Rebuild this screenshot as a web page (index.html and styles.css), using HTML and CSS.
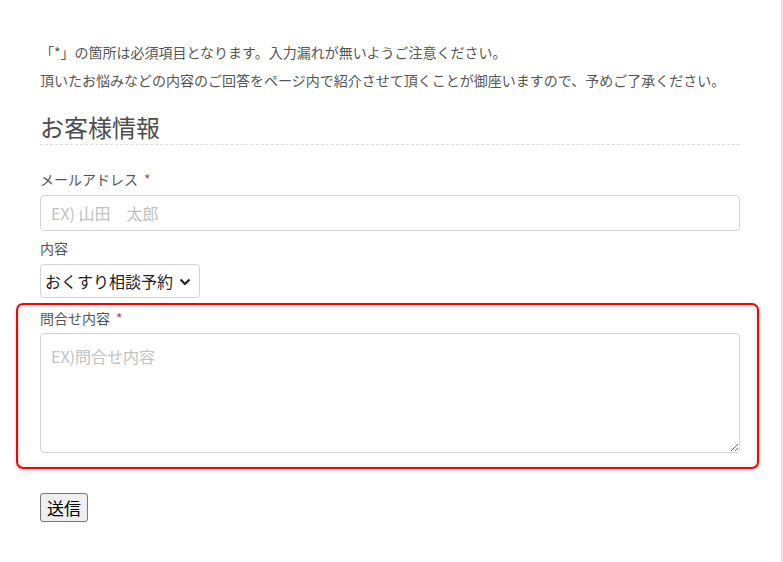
FILE: index.html
```html
<!DOCTYPE html>
<html lang="ja">
<head>
<meta charset="utf-8">
<title>お問い合わせ</title>
<link rel="stylesheet" href="styles.css">
</head>
<body>
<div class="page">
  <form class="form">
    <div class="intro">
      <p>「*」の箇所は必須項目となります。入力漏れが無いようご注意ください。</p>
      <p>頂いたお悩みなどの内容のご回答をページ内で紹介させて頂くことが御座いますので、予めご了承ください。</p>
    </div>
    <h2 class="heading">お客様情報</h2>
    <label class="label label-first" for="email">メールアドレス<span class="req">*</span></label>
    <input class="input" id="email" type="text" placeholder="EX) 山田　太郎">
    <label class="label label-mid" for="kind">内容</label>
    <div class="select-wrap">
      <select class="select" id="kind">
        <option>おくすり相談予約</option>
      </select>
      <svg class="chevron" width="12" height="8" viewBox="0 0 12 8"><path d="M1.5 1.5 L6 6 L10.5 1.5" fill="none" stroke="#222" stroke-width="2.2"/></svg>
    </div>
    <div class="highlight">
      <label class="label" for="msg">問合せ内容<span class="req">*</span></label>
      <textarea class="textarea" id="msg" placeholder="EX)問合せ内容"></textarea>
    </div>
    <div class="actions">
      <button class="submit" type="button">送信</button>
    </div>
  </form>
</div>
</body>
</html>
```

FILE: styles.css
```css
html, body {
  margin: 0;
  padding: 0;
  background: #fff;
}
body {
  font-family: "Noto Sans CJK JP", "Noto Sans", sans-serif;
  color: #555;
}
.page {
  box-sizing: border-box;
  width: 783px;
  min-height: 562px;
  border-right: 2px solid #e6e6e6;
  padding: 38px 0 0 40px;
}
.form {
  width: 700px;
  display: flex;
  flex-direction: column;
  align-items: flex-start;
}
.intro {
  align-self: stretch;
}
.intro p {
  margin: 0;
  font-size: 14px;
  line-height: 28px;
  color: #555;
  white-space: nowrap;
}
.heading {
  align-self: stretch;
  margin: 16px 0 0;
  font-size: 24px;
  font-weight: 400;
  line-height: 34px;
  color: #4d4d4d;
  border-bottom: 1px dashed #dcdcdc;
}
.label {
  display: block;
  font-size: 14px;
  line-height: 20px;
  color: #555;
}
.label-first {
  margin-top: 24px;
}
.label-mid {
  margin-top: 7px;
}
.req {
  margin-left: 6px;
  color: #b54452;
}
.input {
  box-sizing: border-box;
  align-self: stretch;
  margin-top: 6px;
  height: 36px;
  padding: 0 10px;
  border: 1px solid #d4d4d4;
  border-radius: 4px;
  font-family: inherit;
  font-size: 16px;
  color: #333;
  outline: none;
}
.input::placeholder,
.textarea::placeholder {
  color: #c2c2c2;
}
.select-wrap {
  position: relative;
  margin-top: 6px;
}
.select {
  -webkit-appearance: none;
  appearance: none;
  box-sizing: border-box;
  width: 160px;
  height: 34px;
  padding: 0 20px 0 4px;
  border: 1px solid #d4d4d4;
  border-radius: 4px;
  background: #fff;
  font-family: inherit;
  font-size: 16px;
  color: #222;
  outline: none;
}
.chevron {
  position: absolute;
  right: 9px;
  top: 14px;
  pointer-events: none;
}
.highlight {
  box-sizing: border-box;
  align-self: stretch;
  margin: 5px -19px 0 -24px;
  padding: 3px 17px 14px 22px;
  border: 2px solid #f00;
  border-radius: 7px;
  box-shadow: inset 0 0 6px rgba(0, 0, 0, 0.12), 0 2px 5px rgba(0, 0, 0, 0.12);
  display: flex;
  flex-direction: column;
}
.textarea {
  box-sizing: border-box;
  margin-top: 5px;
  height: 120px;
  padding: 10px 10px;
  border: 1px solid #d4d4d4;
  border-radius: 4px;
  font-family: inherit;
  font-size: 16px;
  color: #333;
  resize: both;
  outline: none;
}
.actions {
  margin-top: 24px;
}
.submit {
  box-sizing: border-box;
  height: 29px;
  padding: 0 6px;
  border: 1px solid #767676;
  border-radius: 3px;
  background: #efefef;
  font-family: inherit;
  font-size: 17px;
  line-height: 1;
  color: #000;
}
```
